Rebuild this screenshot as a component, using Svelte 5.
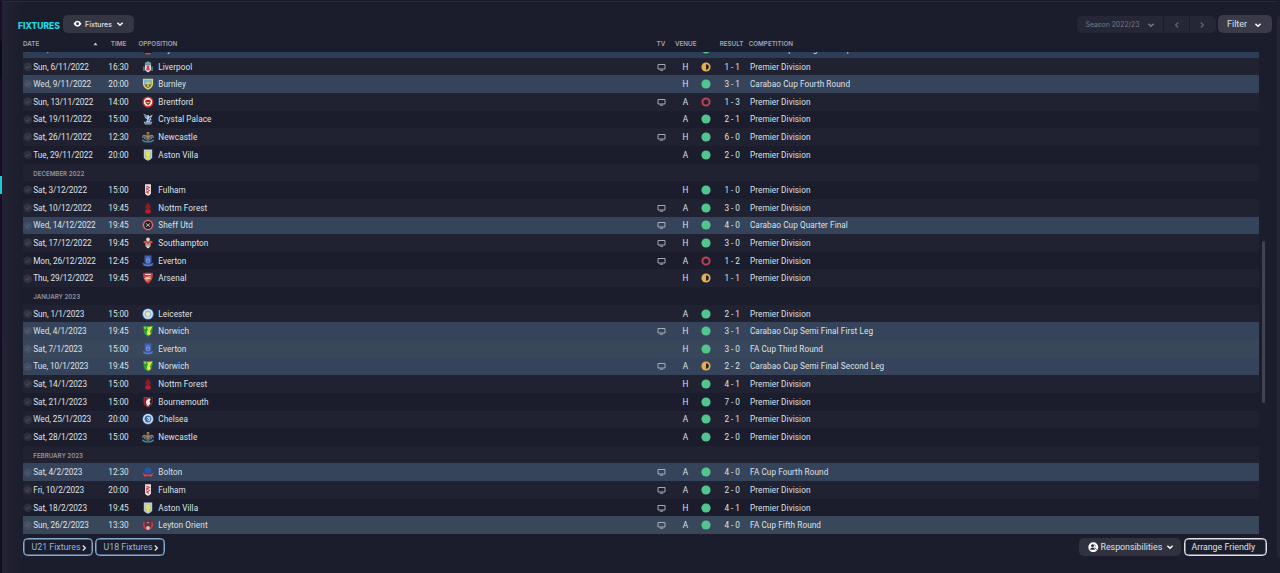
<script lang="ts">
  type Shape = { d: string; fill?: string; stroke?: string; w?: number };
  type Outcome = "win" | "draw" | "loss";
  type Match = {
    date: string;
    time: string;
    team: string;
    tv: boolean;
    venue: string;
    outcome: Outcome;
    result: string;
    competition: string;
    cup: boolean;
  };
  type Row = { month: string } | Match;

  const SHIELD = "M1.5 1H10.5V6.5Q10 9.7 6 11.6Q2 9.7 1.5 6.5Z";
  const ROUND = "M6 .4A5.6 5.6 0 1 1 6 11.6A5.6 5.6 0 1 1 6 .4Z";
  const INNER = "M6 2.6A3.4 3.4 0 1 1 6 9.4A3.4 3.4 0 1 1 6 2.6Z";

  // club crests on a 12x12 grid
  const crests: Record<string, Shape[]> = {
    Feyenoord: [
      { d: ROUND, fill: "#241c22" },
      { d: "M2.5 10H9.5L8 11.5H4Z", fill: "#b0622c" },
    ],
    Liverpool: [
      { d: "M3 3.4H9V8.8Q8.3 10.6 6 11.4Q3.7 10.6 3 8.8Z", fill: "#e6cdd1" },
      { d: "M2.6 3.6L3.2 1.4L6 .2L8.8 1.4L9.4 3.6Z", fill: "#58a89b" },
      { d: "M4.4 4.6H7.6L7 6.6L7.9 8.2L6 9.8L4.1 8.2L5 6.6Z", fill: "#d0405a" },
      { d: "M2 5.6V10M10 5.6V10", stroke: "#6cb0a4", w: 1.1 },
    ],
    Burnley: [
      { d: "M.9 .8H11.1V6.5Q10.4 9.8 6 11.8Q1.6 9.8 .9 6.5Z", fill: "#e0d468" },
      { d: "M2 1.8H10V6.3Q9.3 9 6 10.6Q2.7 9 2 6.3Z", fill: "#7fb4cf" },
      { d: "M2.6 6.4L6 3.4L9.4 6.4L8.3 8.6L6 10L3.7 8.6Z", fill: "#7a6a35" },
      { d: "M3.4 6.3L6 4.2L8.6 6.3M6 5.5V9", stroke: "#e8d75c", w: 1.2 },
    ],
    Brentford: [
      { d: ROUND, fill: "#d02a34" },
      { d: "M6 1.8A4.2 4.2 0 1 1 6 10.2A4.2 4.2 0 1 1 6 1.8Z", fill: "#f6ece8" },
      { d: "M3 5Q6 2.4 9 5L8 7.6L6 9.2L4 7.6Z", fill: "#b3292f" },
      { d: "M4.5 6.6H7.5", stroke: "#e9c85a", w: 1 },
    ],
    "Crystal Palace": [
      { d: "M1.4 .6L5 2.6L6.4 1.8L7.2 3.4L10.8 1.6L8.8 5.4L9.6 7.2L7.6 7.4L8.2 9.4H3.8L5.2 6.6L3 4.6Z", fill: "#c4d3e6" },
      { d: "M2.2 1.8L5.4 4.4M8.6 3.8L6 8", stroke: "#3f68a4", w: 1.1 },
      { d: "M1.6 8.8H10.4L9 11.4H3Z", fill: "#a9b7cd" },
      { d: "M3 10H9", stroke: "#43639b", w: 0.9 },
    ],
    Newcastle: [
      { d: "M3.4 4H8.6V8.2Q7.8 9.8 6 10.4Q4.200 9.8 3.4 8.2Z", fill: "#59605f" },
      { d: "M.8 7Q.9 3.400 3.2 4.4L2.600 8M11.2 7Q11.1 3.400 8.800 4.400L9.400 8", stroke: "#8d9292", w: 1.1 },
      { d: "M5.200 3.7V1.5H6.800V3.7M4.3 5.3H7.7M6 4.5V8.2", stroke: "#b9935f", w: 1 },
      { d: "M.4 8.8Q3 11.4 6 10.8Q9 11.400 11.600 8.8", stroke: "#3c8ea6", w: 1.4 },
    ],
    "Aston Villa": [
      { d: "M1.8 .6H10.2V8.8Q9 10.8 6 11.7Q3 10.8 1.8 8.8Z", fill: "#b9d3e2" },
      { d: "M2.8 2.4H9.2V8.4Q8.200 10 6 10.7Q3.800 10 2.800 8.4Z", fill: "#a3c0c4" },
      { d: "M4 2.8L8.200 2.6L7.800 5L8.7 6.5L7.2 7.6L7.2 9.9H4.5L4.600 7L3.5 5.2Z", fill: "#e8e04e" },
    ],
    Fulham: [
      { d: "M3.100 .3H8.900V9.4Q8.200 11.200 6 11.8Q3.8 11.200 3.100 9.4Z", fill: "#efe9ea" },
      { d: "M4.6 2L7.4 3.5L4.7 5L7.4 6.6L4.7 8.2L7 9.5", stroke: "#c6454c", w: 1.1 },
      { d: "M4.5 2V9", stroke: "#c5585e", w: 0.5 },
    ],
    "Nottm Forest": [
      { d: "M6 .5L8.6 3.400L8.200 4.400L9.2 6.600H2.8L3.800 4.400L3.4 3.400Z", fill: "#8f1a27" },
      { d: "M5.3 6H6.7V7.400H8.5Q9.8 10.200 7.8 11.4H4.2Q2.2 10.200 3.5 7.400H5.3Z", fill: "#b01f2d" },
    ],
    "Sheff Utd": [
      { d: ROUND, fill: "#d13a45" },
      { d: "M6 1.500A4.5 4.5 0 1 1 6 10.5A4.5 4.5 0 1 1 6 1.500Z", fill: "#d9c4c6" },
      { d: "M6 2.1A3.9 3.9 0 1 1 6 9.9A3.9 3.9 0 1 1 6 2.1Z", fill: "#231d27" },
      { d: "M4 4.4L8 7.8M8 4.4L4 7.8", stroke: "#d8d5d8", w: 0.8 },
    ],
    Southampton: [
      { d: "M3.3 5H8.7V8.3Q8 10.7 6 11.6Q4 10.7 3.3 8.3Z", fill: "#e9e6de" },
      { d: "M3.900 6V9.500M8.100 6V9.500", stroke: "#c5333d", w: 1.2 },
      { d: "M1 5Q2.5 2.8 6 3.6Q9.5 2.8 11 5L9.5 6.2H2.5Z", fill: "#c8554a" },
      { d: "M6 .4A1.9 1.9 0 1 1 6 4.2A1.9 1.9 0 1 1 6 .4Z", fill: "#e3d7c6" },
      { d: "M5 6.8H7M6 5.5V9.5", stroke: "#507c42", w: 0.9 },
    ],
    Everton: [
      { d: "M2.5 .6H9.5V6.8Q8.5 9 6 10Q3.5 9 2.5 6.8Z", fill: "#3d5fb6" },
      { d: "M4.6 7.3V3.7L6 2.4L7.4 3.700V7.3ZM4.8 4.8H7.2", stroke: "#94aadf", w: 0.7 },
      { d: "M.5 7.4L3 8.5Q6 10.3 9 8.5L11.5 7.4L10.7 10.600Q6 12.5 1.3 10.600Z", fill: "#4466bb" },
      { d: "M2.2 9.8Q6 11.600 9.8 9.8", stroke: "#7f98d4", w: 0.6 },
    ],
    Arsenal: [
      { d: "M1 1.3Q6 -.3 11 1.3Q11.2 8.7 6 11.7Q.8 8.7 1 1.3Z", fill: "#d03843" },
      { d: "M2.6 6.600H8.800M3.4 5.5L8.7 4.9", stroke: "#e7c9a8", w: 1.1 },
      { d: "M3 2.5H9", stroke: "#efd3d2", w: 1 },
      { d: "M4 8.100A1 1 0 1 0 6 8.100A1 1 0 1 0 4 8.100", stroke: "#e1c18b", w: 0.7 },
    ],
    Leicester: [
      { d: ROUND, fill: "#6fa5d8" },
      { d: "M6 1.2A4.8 4.8 0 1 1 6 10.8A4.8 4.8 0 1 1 6 1.2Z", fill: "#dbe7ef" },
      { d: INNER, fill: "#8db4da" },
      { d: "M3.5 4L5.2 4.800L6 2.8L6.8 4.800L8.500 4L7.7 7.7L6 9.200L4.3 7.7Z", fill: "#ebe6b9" },
    ],
    Norwich: [
      { d: "M1 .9H11L10 7.8Q8.7 10.700 6 11.8Q3.300 10.700 2 7.8Z", fill: "#2c9a3c" },
      { d: "M4.8 2.6L10.4 1.4L8.7 5L7.4 7.4L4.8 6.5L6 4.3Z", fill: "#dfe43a" },
      { d: "M4.8 8.3A1.9 1.9 0 1 1 8.6 8.3A1.9 1.9 0 1 1 4.8 8.3Z", fill: "#ebea48" },
      { d: "M2 1.8H4V4H2.4Z", fill: "#9fcb40" },
    ],
    Bournemouth: [
      { d: SHIELD, fill: "#b12c39" },
      { d: "M6 1.4H10V6.2L8 9.4L6 10.5Z", fill: "#2b222b" },
      { d: "M3.8 5.2L7.2 2L8.700 3.6L7.5 5.5L8.5 7.5L6 10.600L4.4 8Z", fill: "#ede8e9" },
      { d: "M3.3 2V8", stroke: "#35212a", w: 0.8 },
    ],
    Chelsea: [
      { d: ROUND, fill: "#4f7ab5" },
      { d: "M6 1A5 5 0 1 1 6 11A5 5 0 1 1 6 1Z", fill: "#d5e0eb" },
      { d: INNER, fill: "#3f6cab" },
      { d: "M5 4.2L7 5L5.4 6.6L6.800 8M7.6 4V8", stroke: "#dfe8f0", w: 0.9 },
    ],
    Bolton: [
      { d: "M1.600 4.8Q2.2 1 6 1Q9.800 1 10.400 4.8L8.800 7.5H3.200Z", fill: "#234f94" },
      { d: "M4.200 2.9H7.5V6.3H4.200ZM4.200 4.6H7.5", stroke: "#2f62a8", w: 0.8 },
      { d: "M.5 6.6Q3.2 9 6 8.3Q8.8 9 11.500 6.6L9.800 10.700L6 9.9L2.2 10.700Z", fill: "#cf3f55" },
    ],
    "Leyton Orient": [
      { d: ROUND, fill: "#75303e" },
      { d: "M3.8 .8L6 2.4L8.2 .8L8.7 4.5L6 7L3.3 4.5Z", fill: "#463a44" },
      { d: "M2.1 3.2Q.7 8 4.3 10M9.9 3.2Q11.3 8 7.7 10", stroke: "#c23c49", w: 1.5 },
      { d: "M4.100 9A1.9 1.9 0 1 1 7.9 9A1.9 1.9 0 1 1 4.100 9Z", fill: "#d2c3c8" },
      { d: "M4.6 3.8H7.4", stroke: "#c9a6ac", w: 0.9 },
    ],
  };

  const LEAGUE = "Premier Division";

  function match(
    date: string,
    time: string,
    team: string,
    tv: number,
    venue: string,
    result: string,
    competition = LEAGUE
  ): Match {
    const [a, b] = result.split(" - ").map(Number);
    const outcome: Outcome = a > b ? "win" : a < b ? "loss" : "draw";
    return { date, time, team, tv: !!tv, venue, outcome, result, competition, cup: competition !== LEAGUE };
  }

  const rows: Row[] = [
    match("Thu, 3/11/2022", "20:00", "Feyenoord", 0, "H", "2 - 0", "UEFA Europa League Group"),
    match("Sun, 6/11/2022", "16:30", "Liverpool", 1, "H", "1 - 1"),
    match("Wed, 9/11/2022", "20:00", "Burnley", 0, "H", "3 - 1", "Carabao Cup Fourth Round"),
    match("Sun, 13/11/2022", "14:00", "Brentford", 1, "A", "1 - 3"),
    match("Sat, 19/11/2022", "15:00", "Crystal Palace", 0, "A", "2 - 1"),
    match("Sat, 26/11/2022", "12:30", "Newcastle", 1, "H", "6 - 0"),
    match("Tue, 29/11/2022", "20:00", "Aston Villa", 0, "A", "2 - 0"),
    { month: "DECEMBER 2022" },
    match("Sat, 3/12/2022", "15:00", "Fulham", 0, "H", "1 - 0"),
    match("Sat, 10/12/2022", "19:45", "Nottm Forest", 1, "A", "3 - 0"),
    match("Wed, 14/12/2022", "19:45", "Sheff Utd", 1, "H", "4 - 0", "Carabao Cup Quarter Final"),
    match("Sat, 17/12/2022", "19:45", "Southampton", 1, "H", "3 - 0"),
    match("Mon, 26/12/2022", "12:45", "Everton", 1, "A", "1 - 2"),
    match("Thu, 29/12/2022", "19:45", "Arsenal", 0, "H", "1 - 1"),
    { month: "JANUARY 2023" },
    match("Sun, 1/1/2023", "15:00", "Leicester", 0, "A", "2 - 1"),
    match("Wed, 4/1/2023", "19:45", "Norwich", 1, "H", "3 - 1", "Carabao Cup Semi Final First Leg"),
    match("Sat, 7/1/2023", "15:00", "Everton", 0, "H", "3 - 0", "FA Cup Third Round"),
    match("Tue, 10/1/2023", "19:45", "Norwich", 1, "A", "2 - 2", "Carabao Cup Semi Final Second Leg"),
    match("Sat, 14/1/2023", "15:00", "Nottm Forest", 0, "H", "4 - 1"),
    match("Sat, 21/1/2023", "15:00", "Bournemouth", 0, "H", "7 - 0"),
    match("Wed, 25/1/2023", "20:00", "Chelsea", 0, "A", "2 - 1"),
    match("Sat, 28/1/2023", "15:00", "Newcastle", 0, "A", "2 - 0"),
    { month: "FEBRUARY 2023" },
    match("Sat, 4/2/2023", "12:30", "Bolton", 1, "A", "4 - 0", "FA Cup Fourth Round"),
    match("Fri, 10/2/2023", "20:00", "Fulham", 1, "A", "2 - 0"),
    match("Sat, 18/2/2023", "19:45", "Aston Villa", 1, "H", "4 - 1"),
    match("Sun, 26/2/2023", "13:30", "Leyton Orient", 1, "A", "4 - 0", "FA Cup Fifth Round"),
  ];
</script>

{#snippet chevron(dir: string)}
  <svg class="chevron {dir}" viewBox="0 0 8 8"><path d="M1.4 2.8L4 5.3L6.6 2.8" /></svg>
{/snippet}

<div class="screen">
  <div class="rail"><div class="marker"></div></div>

  <main class="panel">
    <header class="toolbar">
      <h1>FIXTURES</h1>
      <button class="btn view">
        <svg class="eye" viewBox="0 0 10 8">
          <path fill-rule="evenodd" d="M.6 4Q2.3 .8 5 .8T9.4 4Q7.7 7.2 5 7.2T.6 4ZM5 2.4A1.6 1.6 0 1 0 5 5.6A1.6 1.6 0 1 0 5 2.4Z" />
        </svg>
        <span>Fixtures</span>
        {@render chevron("down")}
      </button>
      <div class="season">
        <button class="pick"><span>Season 2022/23</span>{@render chevron("down")}</button>
        <button class="step">{@render chevron("left")}</button>
        <button class="step">{@render chevron("right")}</button>
      </div>
      <button class="btn filter"><span>Filter</span>{@render chevron("down")}</button>
    </header>

    <div class="columns">
      <span>DATE</span>
      <span class="sort"><svg viewBox="0 0 6 5"><path d="M3 .6L5.5 4.2H.5Z" /></svg></span>
      <span class="time-head">TIME</span>
      <span>OPPOSITION</span>
      <span>TV</span>
      <span>VENUE</span>
      <span>RESULT</span>
      <span>COMPETITION</span>
    </div>

    <div class="body">
      <div class="list">
        {#each rows as row, i}
          {#if "month" in row}
            <div class="row month" class:odd={i % 2 === 1}>{row.month}</div>
          {:else}
            <div class="row" class:odd={i % 2 === 1} class:cup={row.cup} class:europe={i === 0}>
              <svg class="tick" viewBox="0 0 10 10">
                <circle cx="5" cy="5" r="4.6" />
                <path d="M3 5.2L4.5 6.6L7.2 3.6" />
              </svg>
              <span class="date">{row.date}</span>
              <span class="time">{row.time}</span>
              <span class="crest">
                <svg viewBox="0 0 12 12">
                  {#each crests[row.team] as s}
                    <path d={s.d} fill={s.fill ?? "none"} stroke={s.stroke ?? "none"} stroke-width={s.w ?? 0} />
                  {/each}
                </svg>
              </span>
              <span class="name">{row.team}</span>
              <span class="tv">
                {#if row.tv}
                  <svg viewBox="0 0 9 8"><path d="M1 1.5H8V6H1ZM2.8 7.2H6.2" /></svg>
                {/if}
              </span>
              <span class="venue">{row.venue}</span>
              <svg class="outcome {row.outcome}" viewBox="0 0 10 10">
                {#if row.outcome === "win"}
                  <circle cx="5" cy="5" r="4.6" />
                {:else if row.outcome === "draw"}
                  <circle cx="5" cy="5" r="4.6" />
                  <path d="M5 2.2A2.8 2.8 0 0 1 5 7.8Z" />
                {:else}
                  <circle cx="5" cy="5" r="3.6" />
                {/if}
              </svg>
              <span class="result">{row.result}</span>
              <span class="name">{row.competition}</span>
            </div>
          {/if}
        {/each}
      </div>
      <div class="track"><div class="thumb"></div></div>
    </div>

    <footer class="actions">
      <button class="outline blue">U21 Fixtures {@render chevron("right")}</button>
      <button class="outline blue">U18 Fixtures {@render chevron("right")}</button>
      <button class="btn resp">
        <svg class="person" viewBox="0 0 12 12">
          <circle cx="6" cy="6" r="5.6" fill="#fff" />
          <circle cx="5.2" cy="4.3" r="1.7" fill="#2d2f3d" />
          <path d="M2.3 8.8Q2.8 6.3 5.2 6.3T8 8.8Z" fill="#2d2f3d" />
          <path d="M7.2 3L9 4.8M7.5 6.3L10 8.7" stroke="#2d2f3d" stroke-width=".9" />
        </svg>
        <span>Responsibilities</span>
        {@render chevron("down")}
      </button>
      <button class="outline white">Arrange Friendly</button>
    </footer>
  </main>

  <div class="edge"></div>
</div>

<style>
  :global(body) {
    margin: 0;
    background: #1b1d2c;
  }

  .screen {
    display: flex;
    box-sizing: border-box;
    width: 1280px;
    height: 573px;
    overflow: hidden;
    background: linear-gradient(to right, #222435 0, #1b1d2c 24px);
    border-top: 1px solid #191b28;
    font-family: Roboto, "Liberation Sans", sans-serif;
    color: #dfe1e7;
  }

  button {
    display: flex;
    align-items: center;
    box-sizing: border-box;
    margin: 0;
    padding: 0;
    border: 0;
    background: none;
    color: inherit;
    font: inherit;
    white-space: nowrap;
  }

  svg {
    display: block;
    flex: none;
  }

  .rail {
    width: 2px;
    flex: none;
    background: linear-gradient(#1a0d29 0 40px, #0b0b14 40px 78px, #180c29 78px 340px, #130d21 340px);
  }

  .marker {
    height: 18px;
    width: 1.5px;
    margin-top: 175px;
    background: #25c9d8;
  }

  .panel {
    flex: 1;
    min-width: 0;
    box-sizing: border-box;
    padding-left: 21px;
    border-top: 1px solid #292b3a;
  }

  .edge {
    width: 3px;
    height: 542px;
    margin-top: 15px;
    flex: none;
    border-radius: 3px 0 0 3px;
    background: #242636;
  }

  .chevron {
    width: 8px;
    height: 8px;
    fill: none;
    stroke: currentColor;
    stroke-width: 1.5;
  }

  .chevron.left {
    transform: rotate(90deg);
  }

  .chevron.right {
    transform: rotate(-90deg);
  }

  .toolbar {
    display: flex;
    align-items: center;
    height: 18px;
    margin-left: -5px;
    padding-top: 13px;
    padding-right: 5px;
  }

  h1 {
    width: 45px;
    margin: 3px 0 0;
    font: 800 8.5px/12px Inter, sans-serif;
    color: #1bdbe9;
  }

  .btn {
    height: 18px;
    border-radius: 5px;
    background: #353643;
  }

  .view {
    width: 71px;
    padding-left: 9.5px;
    font: 500 7px Inter, sans-serif;
  }

  .eye {
    width: 9px;
    height: 7.5px;
    margin-right: 3.5px;
    fill: #fff;
  }

  .view .chevron {
    margin-left: 4px;
    color: #fff;
  }

  .season {
    display: flex;
    gap: 1px;
    height: 17px;
    margin-top: 1px;
    margin-left: auto;
    margin-right: 2px;
    color: #777986;
  }

  .season button {
    background: #252736;
  }

  .season .pick {
    width: 86px;
    padding-left: 8.5px;
    border-radius: 5px 0 0 5px;
    font: 400 6.9px Inter, sans-serif;
  }

  .pick .chevron {
    margin-left: 7px;
  }

  .season .step {
    width: 25px;
    justify-content: center;
    color: #5c5e6c;
  }

  .season .step:last-child {
    width: 26px;
    padding-right: 3px;
    border-radius: 0 5px 5px 0;
  }

  .filter {
    width: 54px;
    padding-left: 9px;
    padding-bottom: 1px;
    background: #3a3a48;
    font-size: 9px;
  }

  .filter .chevron {
    margin-top: 2px;
    margin-left: 7px;
    color: #fff;
  }

  .columns {
    display: grid;
    grid-template-columns: 66px 13px 36.5px 518px 18.5px 44.7px 29px 1fr;
    align-items: center;
    box-sizing: border-box;
    height: 19px;
    padding-top: 2px;
    font: 600 6.25px Inter, sans-serif;
    color: #a3a4b0;
  }

  .sort svg {
    width: 5px;
    height: 4px;
    margin: 0 auto;
    fill: #c9cad2;
  }

  .time-head {
    padding-right: 3.5px;
    text-align: center;
  }

  .body {
    display: flex;
    height: 482.5px;
  }

  .list {
    width: 1236px;
    overflow: hidden;
  }

  .row {
    display: grid;
    grid-template-columns: 10.3px 71.7px 27px 26.3px 494.7px 18px 29px 11.6px 38.4px 1fr;
    align-items: center;
    height: 17.65px;
    font-size: 8.2px;
    line-height: 12px;
    white-space: nowrap;
  }

  .row:first-child {
    margin-top: -11.9px;
  }

  .row.odd {
    background: #202231;
  }

  .row.cup {
    background: #35445a;
  }

  .row.cup.odd {
    background: #39475b;
  }

  .row.cup.europe {
    background: #2b3d57;
  }

  .row.month {
    display: block;
    box-sizing: border-box;
    padding-left: 10.3px;
    font: 600 6.15px/19.6px Inter, sans-serif;
    color: #92939f;
  }

  .tick {
    width: 9.5px;
    height: 9.5px;
  }

  .tick circle {
    fill: rgba(120, 122, 138, 0.2);
  }

  .tick path {
    fill: none;
    stroke: rgba(150, 152, 165, 0.32);
    stroke-width: 1;
  }

  .date {
    letter-spacing: -0.07px;
  }

  .name {
    letter-spacing: 0.08px;
  }

  .time,
  .venue,
  .result {
    text-align: center;
  }

  .crest {
    padding-left: 5.7px;
  }

  .crest svg {
    width: 12px;
    height: 12px;
    margin: 0 auto;
  }

  .tv {
    padding-right: 1px;
  }

  .tv svg {
    width: 9px;
    height: 8px;
    margin: 0 auto;
    fill: none;
    stroke: #b4b8c2;
    stroke-width: 0.9;
  }

  .outcome {
    width: 10px;
    height: 10px;
    margin: 0 auto;
  }

  .win circle {
    fill: #51c58d;
  }

  .draw circle {
    fill: #e4ae51;
  }

  .draw path {
    fill: #25222b;
  }

  .loss circle {
    fill: none;
    stroke: #bd4354;
    stroke-width: 2;
  }

  .result {
    padding-left: 2.8px;
  }

  .track {
    width: 3px;
    margin-left: 3px;
  }

  .thumb {
    height: 162px;
    margin-top: 189px;
    border-radius: 2px;
    background: #414351;
  }

  .actions {
    display: flex;
    align-items: center;
    gap: 3px;
    padding-top: 3.5px;
    padding-right: 10px;
    font-size: 8.8px;
  }

  .outline {
    height: 18px;
    border: 1px solid;
    border-radius: 4.5px;
  }

  .blue {
    width: 69.5px;
    padding-left: 7.5px;
    padding-bottom: 1px;
    border-color: #83acd0;
    box-shadow: inset 0 0 0 0.5px #83acd0;
    color: #94b9da;
  }

  .blue + .blue {
    margin-left: -0.5px;
  }

  .blue .chevron {
    margin-top: 2px;
    margin-left: -0.5px;
    color: #c4dcf0;
  }

  .resp {
    width: 101.5px;
    margin-left: auto;
    padding-left: 9px;
    background: #303240;
  }

  .person {
    width: 10.5px;
    height: 10.5px;
    margin-right: 2px;
  }

  .resp span {
    padding-bottom: 1px;
  }

  .resp .chevron {
    margin-left: 4px;
    color: #fff;
  }

  .white {
    width: 83.5px;
    justify-content: center;
    padding-right: 4px;
    padding-bottom: 1px;
    border-color: #e2e3e8;
    box-shadow: inset 0 0 0 0.5px #e2e3e8;
  }
</style>
